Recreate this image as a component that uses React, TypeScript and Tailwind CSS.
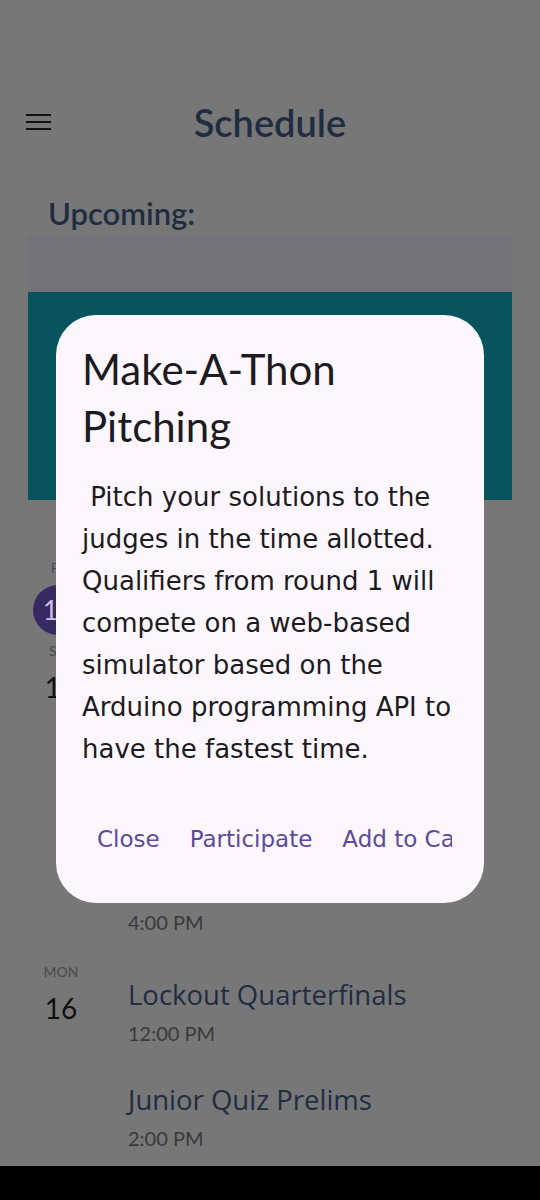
import React from "react";

const F = { fontFamily: "Lato, 'Open Sans', sans-serif" };

function Title({ children }: { children: React.ReactNode }) {
  return (
    <div className="text-[27.5px] leading-[34px] text-[#1f2d43]" style={{ fontFamily: "'Open Sans', sans-serif" }}>
      {children}
    </div>
  );
}

function Event({ title, time }: { title: string; time: string }) {
  return (
    <div className="flex flex-col h-[105px]">
      <Title>{title}</Title>
      <div className="text-[20px] leading-[28px] mt-[7px] text-[#3a3a3c]">{time}</div>
    </div>
  );
}

export default function App() {
  return (
    <div className="relative w-[540px] h-[1200px] overflow-hidden bg-[#777777]" style={F}>
      {/* Page (dimmed by scrim) */}
      <div className="flex flex-col h-full">
        <div className="h-[95px]" />
        <div className="relative flex items-center justify-center h-[54px]">
          <div className="absolute left-[26px] top-[19px] flex flex-col gap-[5px]">
            <div className="w-[25px] h-[2px] bg-[#111111]" />
            <div className="w-[25px] h-[2px] bg-[#111111]" />
            <div className="w-[25px] h-[2px] bg-[#111111]" />
          </div>
          <div className="text-[38px] leading-[54px] font-semibold text-[#1f2d43]">Schedule</div>
        </div>
        <div className="pl-[48px] mt-[44px] text-[31px] leading-[40px] font-semibold text-[#1f2d43]">Upcoming:</div>
        <div className="mx-[28px] mt-[3px] h-[56px] bg-[#757379]" />
        <div className="mx-[28px] h-[208px] bg-[#07545e]" />

        {/* FRI */}
        <div className="flex mt-[58px]">
          <div className="w-[66px] ml-[28px] flex flex-col items-center">
            <div className="text-[14px] leading-[20px] text-[#4c4866]">FRI</div>
            <div className="mt-[7px] ml-[-6px] w-[50px] h-[50px] rounded-full bg-[#372a63] flex items-center justify-center text-[26px] text-[#c9c3dd]">13</div>
          </div>
          <div className="ml-[34px] mt-[16px] flex flex-col">
            <Title>Opening Ceremony</Title>
          </div>
        </div>

        {/* SAT */}
        <div className="flex mt-[6px]">
          <div className="w-[66px] ml-[28px] flex flex-col items-center">
            <div className="text-[14px] leading-[20px] text-[#4a4a4a]">SAT</div>
            <div className="mt-[8px] text-[28px] leading-[36px] text-[#0f0f0f]">14</div>
          </div>
          <div className="ml-[34px] mt-[16px] flex flex-col">
            <Event title="Make-A-Thon Pitching" time="10:00 AM" />
            <Event title="Senior Quiz Prelims" time="1:00 PM" />
            <div className="flex flex-col">
              <Title>Lockout Prelims</Title>
              <div className="text-[20px] leading-[28px] mt-[7px] text-[#3a3a3c]">4:00 PM</div>
            </div>
          </div>
        </div>

        {/* MON */}
        <div className="flex mt-[26px]">
          <div className="w-[66px] ml-[28px] flex flex-col items-center">
            <div className="text-[14px] leading-[20px] text-[#4a4a4a]">MON</div>
            <div className="mt-[8px] text-[28px] leading-[36px] text-[#0f0f0f]">16</div>
          </div>
          <div className="ml-[34px] mt-[16px] flex flex-col">
            <Event title="Lockout Quarterfinals" time="12:00 PM" />
            <Event title="Junior Quiz Prelims" time="2:00 PM" />
          </div>
        </div>
      </div>

      {/* Navigation bar */}
      <div className="absolute left-0 right-0 bottom-0 h-[34px] bg-black" />

      {/* Dialog */}
      <div className="absolute left-[56px] top-[315px] w-[428px] h-[588px] rounded-[40px] bg-[#fdf7fd] flex flex-col">
        <div className="px-[26px] pt-[26px] text-[42px] leading-[57px] text-[#1c1b1f]">
          Make-A-Thon Pitching
        </div>
        <div
          className="pl-[26px] pr-[22px] mt-[21px] text-[26px] leading-[42px] text-[#1c1b1f] whitespace-pre-wrap"
          style={{ fontFamily: "'DejaVu Sans', sans-serif" }}
        >
          {" Pitch your solutions to the judges in the time allotted. Qualifiers from round 1 will compete on a web-based simulator based on the Arduino programming API to have the fastest time."}
        </div>
        <div
          className="ml-[26px] mr-[32px] mt-[49px] flex overflow-hidden text-[23px] leading-[40px] text-[#5c4b99]"
          style={{ fontFamily: "'DejaVu Sans', sans-serif" }}
        >
          <div className="shrink-0 px-[15px]">Close</div>
          <div className="shrink-0 px-[15px]">Participate</div>
          <div className="shrink-0 px-[15px]">Add to Calendar</div>
        </div>
      </div>
    </div>
  );
}
